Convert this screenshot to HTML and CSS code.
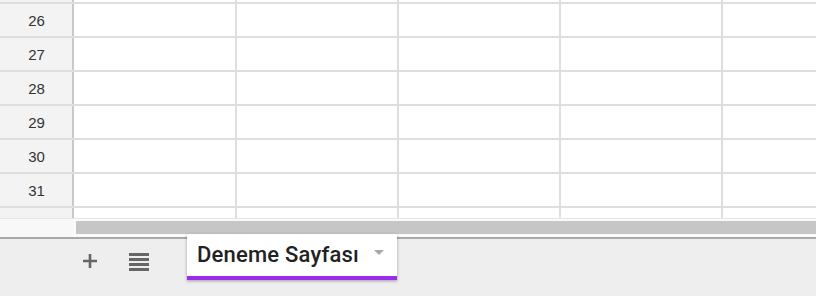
FILE: index.html
```html
<!DOCTYPE html>
<html lang="tr">
<head>
<meta charset="utf-8">
<link rel="stylesheet" href="styles.css">
</head>
<body>
<div class="sheet">
  <div class="grid">
    <div class="row stub"><div class="hdr"></div><div class="c"></div><div class="c"></div><div class="c"></div><div class="c"></div><div class="c last"></div></div>
    <div class="row"><div class="hdr">26</div><div class="c"></div><div class="c"></div><div class="c"></div><div class="c"></div><div class="c last"></div></div>
    <div class="row"><div class="hdr">27</div><div class="c"></div><div class="c"></div><div class="c"></div><div class="c"></div><div class="c last"></div></div>
    <div class="row"><div class="hdr">28</div><div class="c"></div><div class="c"></div><div class="c"></div><div class="c"></div><div class="c last"></div></div>
    <div class="row"><div class="hdr">29</div><div class="c"></div><div class="c"></div><div class="c"></div><div class="c"></div><div class="c last"></div></div>
    <div class="row"><div class="hdr">30</div><div class="c"></div><div class="c"></div><div class="c"></div><div class="c"></div><div class="c last"></div></div>
    <div class="row"><div class="hdr">31</div><div class="c"></div><div class="c"></div><div class="c"></div><div class="c"></div><div class="c last"></div></div>
    <div class="row partial"><div class="hdr"></div><div class="c"></div><div class="c"></div><div class="c"></div><div class="c"></div><div class="c last"></div></div>
  </div>
  <div class="scrollrow">
    <div class="corner"></div>
    <div class="track"><div class="thumb"></div></div>
  </div>
  <div class="tabbar">
    <button class="iconbtn add" aria-label="Sayfa ekle">
      <svg width="16" height="16" viewBox="0 0 16 16"><path d="M8 1v14M1 8h14" stroke="#666" stroke-width="2.6" fill="none"/></svg>
    </button>
    <button class="iconbtn list" aria-label="Tüm sayfalar">
      <svg width="20" height="18" viewBox="0 0 20 18"><path d="M0 1.5h20M0 6.5h20M0 11.5h20M0 16.5h20" stroke="#666" stroke-width="2.8" fill="none"/></svg>
    </button>
    <div class="tab">
      <span class="tabname">Deneme Sayfası</span>
      <span class="caret"></span>
    </div>
  </div>
</div>
</body>
</html>
```
FILE: styles.css
```css
html, body {
  margin: 0;
  padding: 0;
  width: 816px;
  height: 296px;
  overflow: hidden;
  background: #fff;
  font-family: "Liberation Sans", Arial, sans-serif;
}

.sheet {
  width: 816px;
  height: 296px;
  display: flex;
  flex-direction: column;
  position: relative;
}

.grid {
  display: flex;
  flex-direction: column;
}

.row {
  display: grid;
  grid-template-columns: 74px 163px 162px 162px 162px 93px;
  height: 34px;
  box-sizing: border-box;
  border-bottom: 2px solid #dedede;
}

.row.stub {
  height: 4px;
}

.row.partial {
  height: 11px;
  border-bottom: 1px solid #e6e6e6;
}

.hdr {
  background: #f3f3f3;
  border-right: 2px solid #c8c8c8;
  color: #333;
  font-size: 15px;
  display: flex;
  align-items: center;
  justify-content: center;
  padding-left: 1px;
}

.c {
  border-right: 2px solid #dedede;
  background: #fff;
}

.c.last {
  border-right: none;
}

.scrollrow {
  display: flex;
  height: 18px;
}

.corner {
  width: 74px;
  background: #f8f8f8;
}

.track {
  flex: 1;
  background: #fafafa;
  padding: 2px 0 3px 2px;
  display: flex;
}

.thumb {
  flex: 1;
  background: #c6c6c6;
}

.tabbar {
  flex: 1;
  background: #eeeeee;
  border-top: 2px solid #a9a9a9;
  display: flex;
  align-items: flex-start;
  position: relative;
}

.iconbtn {
  border: none;
  background: transparent;
  padding: 0;
  display: flex;
  align-items: center;
  justify-content: center;
}

.iconbtn.add {
  margin: 13px 0 0 81px;
  width: 17px;
  height: 17px;
}

.iconbtn.list {
  margin: 14px 0 0 31px;
  width: 20px;
  height: 18px;
}

.tab {
  position: absolute;
  left: 187px;
  top: -5px;
  width: 210px;
  height: 46px;
  box-sizing: border-box;
  background: #fff;
  border-bottom: 4px solid #9a2cf0;
  box-shadow: 0 1px 3px rgba(0, 0, 0, 0.35);
  display: flex;
  align-items: center;
  padding: 0 0 1px 10px;
}

.tabname {
  font-family: Roboto, "Liberation Sans", sans-serif;
  font-weight: 500;
  font-size: 22px;
  letter-spacing: 0.2px;
  color: #222;
  flex: 1;
}

.caret {
  width: 0;
  height: 0;
  border-left: 5px solid transparent;
  border-right: 5px solid transparent;
  border-top: 5px solid #a8a8a8;
  margin: 0 13px 4px 0;
}
```
